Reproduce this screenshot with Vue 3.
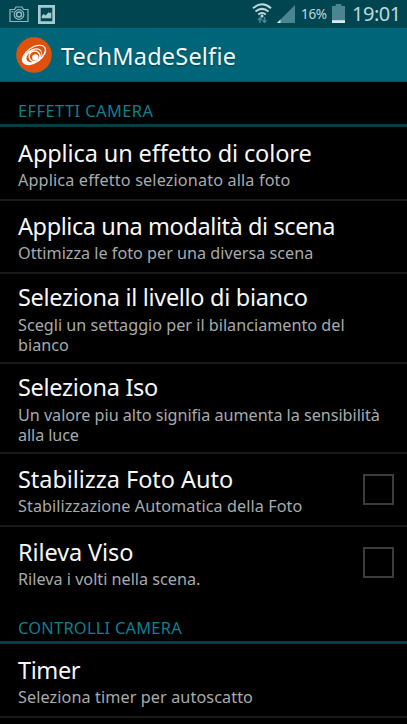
<script setup>
const sections = [
  {
    name: 'EFFETTI CAMERA',
    track: 0.45,
    items: [
      { title: 'Applica un effetto di colore', track: -0.11, lines: [{ text: 'Applica effetto selezionato alla foto', track: 0.15 }] },
      { title: 'Applica una modalità di scena', track: -0.41, lines: [{ text: 'Ottimizza le foto per una diversa scena', track: 0 }] },
      { title: 'Seleziona il livello di bianco', track: -0.3, lines: [{ text: 'Scegli un settaggio per il bilanciamento del', track: 0 }, { text: 'bianco', track: 0 }] },
      { title: 'Seleziona Iso', track: -0.3, lines: [{ text: 'Un valore piu alto signifia aumenta la sensibilità', track: -0.04 }, { text: 'alla luce', track: -0.1 }] },
      { title: 'Stabilizza Foto Auto', track: -0.05, lines: [{ text: 'Stabilizzazione Automatica della Foto', track: 0.08 }], check: true },
      { title: 'Rileva Viso', track: -0.1, lines: [{ text: 'Rileva i volti nella scena.', track: 0 }], check: true },
    ],
  },
  {
    name: 'CONTROLLI CAMERA',
    track: 0.25,
    items: [{ title: 'Timer', track: -0.4, lines: [{ text: 'Seleziona timer per autoscatto', track: 0.1 }] }],
  },
]
const spacing = (t) => ({ letterSpacing: t + 'px' })
</script>

<template>
  <div class="screen">
    <header class="status">
      <svg class="camera" width="20" height="17" viewBox="0 0 20 17" fill="none" stroke="#8db9c1" stroke-width="1.2">
        <path d="M1 3.5h4.5l1.5-2.5h6l1.5 2.5H19v12H1z" />
        <circle cx="10" cy="8.5" r="4.8" />
        <circle cx="10" cy="8.5" r="2.5" stroke-width="1.5" />
        <path d="M2.5 5.7h2" />
      </svg>
      <svg class="picture" width="17" height="19" viewBox="0 0 17 19">
        <path fill="#a5cbd1" fill-rule="evenodd" d="M0 0h17v19H0zM2.7 2.7v13.6h11.6V2.7z" />
        <path fill="#a5cbd1" d="M3.7 13.3v-2.2l2-2 2 1.5 2.8-3.3 1.5 1 1.3-1.3v6.3z" />
      </svg>
      <span class="grow"></span>
      <svg class="wifi" width="20" height="21" viewBox="0 0 20 21">
        <g fill="none" stroke="#bed8dd" stroke-width="2">
          <path d="M1 5.2Q10-2.6 19 5.2" />
          <path d="M3.5 8.5q6.5-5.2 13 0" />
          <path d="M6.2 11.5q3.8-3 7.6 0" />
        </g>
        <circle cx="10" cy="13" r="1.5" fill="#bed8dd" />
        <path d="M8 20v-5M6 17l2-2.2 2 2.2M12.5 14v5.5M10.5 17.3l2 2.2 2-2.2" fill="none" stroke="#4b858f" stroke-width="1.5" />
      </svg>
      <svg class="signal" width="18" height="19" viewBox="0 0 18 19">
        <path fill="#4b858f" d="M18 0v18H0z" />
        <path fill="#dce9ec" d="M3.5 14.5V18H0z" />
      </svg>
      <span class="percent">16%</span>
      <svg class="battery" width="13" height="19" viewBox="0 0 13 19">
        <path fill="#4b858f" d="M3.7 0h5.6v2H13v17H0V2h3.7z" />
        <path fill="#dce9ec" d="M0 16.2h13V19H0z" />
      </svg>
      <span class="clock">19:01</span>
    </header>

    <div class="bar">
      <svg class="logo" width="36" height="36" viewBox="0 0 36 36">
        <circle cx="18" cy="18" r="17.8" fill="#df520d" />
        <g transform="rotate(-35 18 18)">
          <ellipse cx="18" cy="18" rx="13.7" ry="8" fill="#fff" />
          <ellipse cx="18.6" cy="17.6" rx="12" ry="6.4" fill="#df520d" />
          <ellipse cx="16" cy="18.3" rx="10.5" ry="6.6" fill="#fff" />
          <ellipse cx="17.3" cy="18.6" rx="8.2" ry="5.2" fill="#df520d" />
        </g>
        <circle cx="18.6" cy="19.4" r="5.4" fill="#df520d" stroke="#fff" stroke-width="1.5" />
        <circle cx="19.4" cy="20.5" r="3.2" fill="#fff" />
      </svg>
      <h1>TechMadeSelfie</h1>
    </div>

    <main>
      <section v-for="s in sections" :key="s.name">
        <h2 :style="spacing(s.track)">{{ s.name }}</h2>
        <div v-for="i in s.items" :key="i.title" class="row" :class="{ tall: i.lines.length > 1 }">
          <div class="copy">
            <h3 :style="spacing(i.track)">{{ i.title }}</h3>
            <p v-for="l in i.lines" :key="l.text" :style="spacing(l.track)">{{ l.text }}</p>
          </div>
          <span v-if="i.check" class="box"></span>
        </div>
      </section>
    </main>
  </div>
</template>

<style>
body {
  background: #000;
}
</style>

<style scoped>
.screen {
  width: 407px;
  height: 724px;
  overflow: hidden;
  background: #000;
  font-family: 'Noto Sans', sans-serif;
  font-variant-ligatures: none;
}
.status {
  display: flex;
  height: 28px;
  box-sizing: border-box;
  background: #004550;
  padding: 0 6px 0 9px;
  color: #bed8dd;
  white-space: nowrap;
}
.camera { margin-top: 6px; }
.picture { margin: 5px 0 0 9px; }
.grow { flex: 1; }
.wifi { margin-top: 3px; flex: none; }
.signal { margin: 5px 0 0 5px; flex: none; }
.percent {
  width: 27px;
  margin-left: 6px;
  font-size: 13.5px;
  line-height: 29px;
  letter-spacing: -0.3px;
}
.battery { margin: 4px 0 0 4px; flex: none; }
.clock {
  width: 49px;
  margin-left: 7px;
  font-size: 20px;
  line-height: 28px;
  letter-spacing: -0.5px;
}
.bar {
  display: flex;
  height: 54px;
  box-sizing: border-box;
  padding: 9px 0 0 16px;
  background: #006578;
  border-bottom: 1px solid #0b4d59;
}
h1 {
  margin: 0 0 0 9px;
  color: #f2fafb;
  font-size: 23.5px;
  font-weight: 400;
  line-height: 38px;
  letter-spacing: 0.2px;
  text-shadow: 0 1px 2px #00404c;
}
h2 {
  height: 45px;
  margin: 0 0 1px;
  box-sizing: border-box;
  border-bottom: 3px solid #053e47;
  padding: 17px 18px 0;
  color: #0d7f8f;
  font-size: 16.4px;
  font-weight: 400;
  line-height: 24px;
}
section:last-child h2 {
  height: 44px;
  padding-top: 16px;
}
.row {
  display: flex;
  height: 73px;
  box-sizing: border-box;
  padding: 9px 13px 0 18px;
  border-bottom: 2px solid #1a1a1a;
}
.row.tall {
  height: 90px;
  padding-top: 7px;
}
.row:last-child {
  border-bottom-color: #000;
}
section:last-child .row {
  border-bottom-color: #1a1a1a;
}
.copy { flex: 1; white-space: nowrap; }
h3 {
  margin: 0;
  color: #f7f7f7;
  font-size: 23.5px;
  font-weight: 400;
  line-height: 33px;
}
.tall h3 { margin-bottom: 1px; }
p {
  margin: 0;
  color: #a7abad;
  font-size: 16.2px;
  line-height: 20px;
}
.box {
  width: 31px;
  height: 31px;
  box-sizing: border-box;
  margin-top: 11px;
  border: 2px solid #3c3c3c;
}
</style>
